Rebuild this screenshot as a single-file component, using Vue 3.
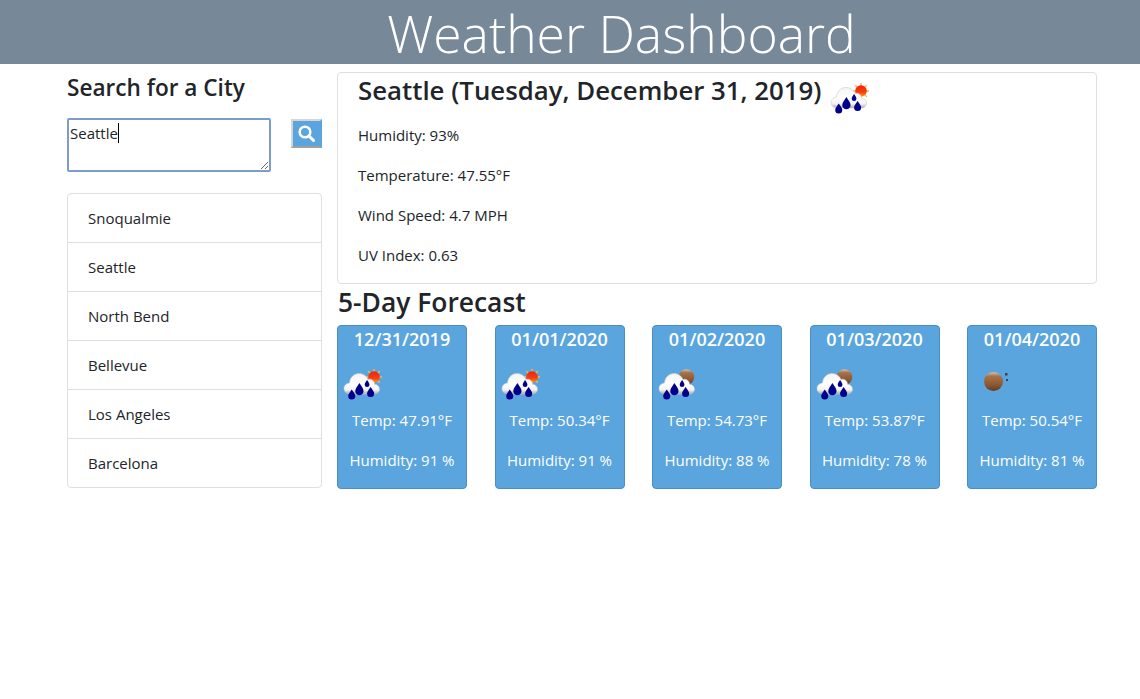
<template>
  <div class="page">
    <svg class="icon-defs" width="0" height="0">
      <defs>
        <linearGradient id="cloudFill" x1="0" y1="0" x2="0" y2="1">
          <stop offset="0" stop-color="#f4f4f4" />
          <stop offset="0.55" stop-color="#ffffff" />
          <stop offset="0.8" stop-color="#f2f2f2" />
          <stop offset="1" stop-color="#a9a9a9" />
        </linearGradient>
        <linearGradient id="sunFill" x1="0" y1="0" x2="0" y2="1">
          <stop offset="0" stop-color="#f0200f" />
          <stop offset="0.6" stop-color="#f5400f" />
          <stop offset="1" stop-color="#fb9a1e" />
        </linearGradient>
        <linearGradient id="moonFill" x1="0" y1="0" x2="0" y2="1">
          <stop offset="0" stop-color="#d9c3a8" />
          <stop offset="0.22" stop-color="#a5744c" />
          <stop offset="0.7" stop-color="#8a5630" />
          <stop offset="1" stop-color="#5e3d24" />
        </linearGradient>
        <symbol id="drops" viewBox="0 0 40 32">
          <g transform="translate(17 22) scale(1.18) translate(-17 -22)" fill="#00008b">
            <path d="M10 21.500c-2 3-3 4-3 5.500a3 3 0 0 0 6 0c0-1.500-1-2.500-3-5.500z" />
            <path d="M16.500 16c-2.300 3.500-3.500 5-3.500 7a3.500 3.500 0 0 0 7 0c0-2-1.200-3.500-3.500-7z" />
            <path d="M23 13.500c-1.300 2-2 3-2 4a2 2 0 0 0 4 0c0-1-.7-2-2-4z" />
            <path d="M26 19.500c-2 3-3 4-3 5.500a3 3 0 0 0 6 0c0-1.500-1-2.500-3-5.500z" />
          </g>
        </symbol>
        <symbol id="cloud" viewBox="0 0 40 32">
          <path d="M7 26c-3.500 0-6-2.400-6-5.500s2.500-5.300 5.500-5.500c.3-5.500 4.500-9.500 9.500-9.500 4.200 0 7.500 2.500 9 6 1-.4 2.200-.4 3.200 0 2.200.8 3.300 2.700 3.300 4.700 2.800.2 5 2.400 5 5s-2.200 4.800-5 4.800z" fill="url(#cloudFill)" stroke="#c9c9c9" stroke-width=".6" />
        </symbol>
      </defs>
    </svg>

    <header class="banner">
      <h1>Weather Dashboard</h1>
    </header>

    <main class="content">
      <aside class="side">
        <h4>Search for a City</h4>
        <div class="search-row">
          <div class="input-wrap">
            <textarea class="city-input" :value="city"></textarea>
            <span class="caret"></span>
          </div>
          <button class="search-btn" aria-label="Search">
            <svg width="17" height="17" viewBox="0 0 17 17">
              <circle cx="7" cy="7" r="5.300" fill="none" stroke="#fff" stroke-width="2.600" />
              <path d="M11 11l4.500 4.500" stroke="#fff" stroke-width="3" stroke-linecap="round" />
            </svg>
          </button>
        </div>
        <ul class="city-list">
          <li v-for="name in recent" :key="name">{{ name }}</li>
        </ul>
      </aside>

      <section class="main">
        <div class="today">
          <h3 class="today-title">
            Seattle (Tuesday, December 31, 2019)
            <svg class="wx hero-wx" viewBox="0 0 40 32">
              <g v-html="iconParts.sunCloud"></g>
            </svg>
          </h3>
          <p>Humidity: 93%</p>
          <p>Temperature: 47.55°F</p>
          <p>Wind Speed: 4.7 MPH</p>
          <p>UV Index: 0.63</p>
        </div>

        <h3 class="forecast-title">5-Day Forecast</h3>
        <div class="cards">
          <div v-for="day in forecast" :key="day.date" class="card">
            <h5>{{ day.date }}</h5>
            <svg class="wx" viewBox="0 0 40 32">
              <g v-html="iconParts[day.icon]"></g>
            </svg>
            <p>Temp: {{ day.temp }}°F</p>
            <p>Humidity: {{ day.humidity }} %</p>
          </div>
        </div>
      </section>
    </main>
  </div>
</template>

<script setup>
import { ref } from 'vue'

const city = ref('Seattle')
const recent = ['Snoqualmie', 'Seattle', 'North Bend', 'Bellevue', 'Los Angeles', 'Barcelona']

// 天气图标
const rain = '<use href="#cloud" width="40" height="32" /><use href="#drops" width="40" height="32" />'
const rays = '<g stroke="#f6b84a" stroke-width="1.400"><path d="M31 1v16M23 9h16M25.300 3.300l11.400 11.400M36.700 3.300L25.300 14.700" /></g>'
const iconParts = {
  sunCloud: rays + '<circle cx="31" cy="9" r="5.800" fill="url(#sunFill)" />' + rain,
  moonCloud: '<circle cx="28.500" cy="9" r="7.800" fill="url(#moonFill)" />' + rain,
  moon: '<circle cx="20.500" cy="13.500" r="9.500" fill="url(#moonFill)" /><rect x="32" y="5" width="2.500" height="2.500" fill="#444" /><rect x="33" y="11" width="2" height="2" fill="#444" />'
}

const forecast = [
  { date: '12/31/2019', icon: 'sunCloud', temp: '47.91', humidity: 91 },
  { date: '01/01/2020', icon: 'sunCloud', temp: '50.34', humidity: 91 },
  { date: '01/02/2020', icon: 'moonCloud', temp: '54.73', humidity: 88 },
  { date: '01/03/2020', icon: 'moonCloud', temp: '53.87', humidity: 78 },
  { date: '01/04/2020', icon: 'moon', temp: '50.54', humidity: 81 }
]
</script>

<style scoped>
.page {
  min-height: 699px;
  background: #fff;
  color: #212529;
  font-family: "Open Sans", "Noto Sans", sans-serif;
  font-size: 15px;
  line-height: 24px;
}

.icon-defs {
  position: absolute;
}

.banner {
  height: 64px;
  background: #778899;
  color: #fff;
  text-align: center;
  padding-left: 103px;
}

.banner h1 {
  margin: 0;
  font-size: 51.600px;
  font-weight: 300;
  line-height: 66px;
}

.content {
  display: flex;
  gap: 15px;
  padding: 8px 43px 0 67px;
}

.side {
  width: 255px;
  flex: none;
}

.side h4 {
  margin: 1px 0 16px;
  font-size: 22.600px;
  font-weight: 600;
  line-height: 29px;
}

.search-row {
  display: flex;
  justify-content: space-between;
  align-items: flex-start;
}

.input-wrap {
  position: relative;
  width: 204px;
  height: 54px;
}

.city-input {
  display: block;
  width: 204px;
  height: 54px;
  box-sizing: border-box;
  border: 2px solid #7c9ccb;
  border-radius: 2px;
  padding: 1px;
  outline: none;
  font-family: inherit;
  font-size: 15px;
  line-height: 24px;
  color: #212529;
}

.caret {
  position: absolute;
  left: 51px;
  top: 5px;
  width: 1px;
  height: 20px;
  background: #000;
}

.search-btn {
  width: 31px;
  height: 29px;
  margin-top: 1px;
  padding: 0;
  display: flex;
  align-items: center;
  justify-content: center;
  background: #5aa5de;
  border: 2px solid;
  border-color: #d6d6d6 #5aa5de #a0a0a0 #d6d6d6;
}

.city-list {
  list-style: none;
  margin: 21px 0 0;
  padding: 0;
  border: 1px solid #dfdfdf;
  border-radius: 4px;
}

.city-list li {
  height: 49px;
  box-sizing: border-box;
  padding: 12px 20px;
  border-bottom: 1px solid #dfdfdf;
}

.city-list li:last-child {
  height: 48px;
  border-bottom: none;
}

.main {
  flex: 1;
  min-width: 0;
}

.today {
  height: 212px;
  box-sizing: border-box;
  border: 1px solid #dfdfdf;
  border-radius: 4px;
  padding: 0 20px;
}

.today-title {
  margin: 0 0 16px;
  display: flex;
  align-items: flex-start;
  gap: 8px;
  font-size: 25.800px;
  font-weight: 600;
  line-height: 34px;
}

.today p {
  margin: 0 0 16px;
}

.wx {
  display: block;
  width: 40px;
  height: 32px;
}

.hero-wx {
  margin: 9px 0 -7px;
}

.forecast-title {
  margin: 2px 0 7px;
  padding-left: 1px;
  font-size: 26.400px;
  font-weight: 600;
  line-height: 32px;
}

.cards {
  display: flex;
  justify-content: space-between;
}

.card {
  width: 130px;
  height: 164px;
  box-sizing: border-box;
  background: #5aa5de;
  border: 1px solid #4a8fc4;
  border-radius: 4px;
  color: #fff;
  text-align: center;
}

.card h5 {
  margin: 0;
  font-size: 18px;
  font-weight: 600;
  line-height: 26px;
}

.card .wx {
  margin: 16px 0 8px 5px;
}

.card p {
  margin: 0 0 16px;
}
</style>
